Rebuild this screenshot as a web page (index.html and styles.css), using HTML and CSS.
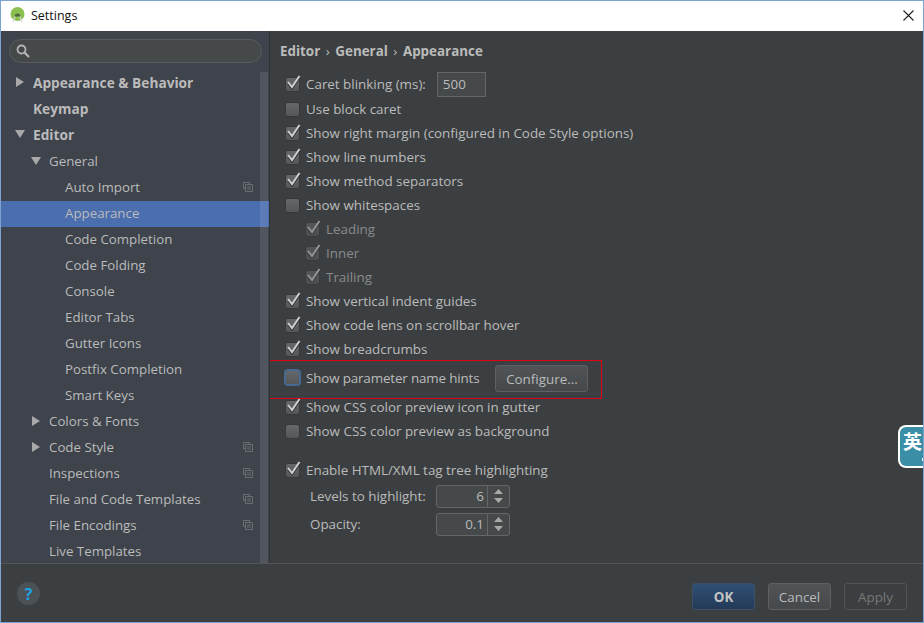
FILE: index.html
```html
<!DOCTYPE html>
<html lang="en">
<head>
<meta charset="utf-8">
<title>Settings</title>
<link rel="stylesheet" href="styles.css">
</head>
<body>
<svg width="0" height="0" class="defs">
  <symbol id="copy" viewBox="0 0 10 10"><path d="M.5.5h6v1.5M.5.5v6H2M2.5 2.500h7v7h-7zM4 5h4M4 7h4" fill="none" stroke="#6a6d71"/></symbol>
  <symbol id="check" viewBox="0 0 16 16"><path d="M3 8.500 7 13.500 14.500 2.500" fill="none" stroke="#2e3032" stroke-width="2"/><path d="M3 7 7 12 14.500 1" fill="none" stroke="#cfcfcf" stroke-width="2"/></symbol>
  <symbol id="spin" viewBox="0 0 9 16"><path d="M4.500 1 9 6H0zM0 10h9l-4.500 5z" fill="#a8a8a8"/></symbol>
</svg>
<div class="window">
  <header class="titlebar">
    <svg class="logo" width="16" height="16" viewBox="0 0 16 16"><circle cx="7.500" cy="7" r="7" fill="#8cc152"/><path d="M3 15 6 7M12 15 9 7" stroke="#d9d9d9" stroke-width="1.200"/><path d="M4.500 9.500a3 3 0 0 1 6 0z" fill="#4f6b35"/></svg>
    <span class="title">Settings</span>
    <svg class="close" width="11" height="11" viewBox="0 0 11 11"><path d="M.5.5 10.500 10.500M10.500.5.5 10.500" stroke="#222" stroke-width="1.100"/></svg>
  </header>
  <div class="content">
    <aside class="sidebar">
      <div class="search">
        <svg width="14" height="14" viewBox="0 0 14 14"><circle cx="5.500" cy="5.500" r="4" fill="none" stroke="#b4b4b4" stroke-width="1.800"/><path d="M8.500 8.500 13 13" stroke="#b4b4b4" stroke-width="2.200"/></svg>
      </div>
      <div class="tree-wrap">
        <ul class="tree">
          <li class="node l0 bold"><i class="tri right"></i>Appearance &amp; Behavior</li>
          <li class="node l0 bold"><i class="tri none"></i>Keymap</li>
          <li class="node l0 bold"><i class="tri down"></i>Editor</li>
          <li class="node l1"><i class="tri down"></i>General</li>
          <li class="node l2">Auto Import<svg class="copy"><use href="#copy"/></svg></li>
          <li class="node l2 selected">Appearance</li>
          <li class="node l2">Code Completion</li>
          <li class="node l2">Code Folding</li>
          <li class="node l2">Console</li>
          <li class="node l2">Editor Tabs</li>
          <li class="node l2">Gutter Icons</li>
          <li class="node l2">Postfix Completion</li>
          <li class="node l2">Smart Keys</li>
          <li class="node l1"><i class="tri right"></i>Colors &amp; Fonts</li>
          <li class="node l1"><i class="tri right"></i>Code Style<svg class="copy"><use href="#copy"/></svg></li>
          <li class="node l1"><i class="tri none"></i>Inspections<svg class="copy"><use href="#copy"/></svg></li>
          <li class="node l1"><i class="tri none"></i>File and Code Templates<svg class="copy"><use href="#copy"/></svg></li>
          <li class="node l1"><i class="tri none"></i>File Encodings<svg class="copy"><use href="#copy"/></svg></li>
          <li class="node l1"><i class="tri none"></i>Live Templates</li>
        </ul>
        <div class="scrollbar"></div>
      </div>
    </aside>
    <main class="main">
      <nav class="crumbs">Editor<span class="sep">›</span>General<span class="sep">›</span>Appearance</nav>
      <div class="row first"><span class="cb on"><svg><use href="#check"/></svg></span>Caret blinking (ms):<span class="input">500</span></div>
      <div class="row"><span class="cb"></span>Use block caret</div>
      <div class="row"><span class="cb on"><svg><use href="#check"/></svg></span>Show right margin (configured in Code Style options)</div>
      <div class="row"><span class="cb on"><svg><use href="#check"/></svg></span>Show line numbers</div>
      <div class="row"><span class="cb on"><svg><use href="#check"/></svg></span>Show method separators</div>
      <div class="row"><span class="cb"></span>Show whitespaces</div>
      <div class="row sub dim"><span class="cb on"><svg><use href="#check"/></svg></span>Leading</div>
      <div class="row sub dim"><span class="cb on"><svg><use href="#check"/></svg></span>Inner</div>
      <div class="row sub dim"><span class="cb on"><svg><use href="#check"/></svg></span>Trailing</div>
      <div class="row"><span class="cb on"><svg><use href="#check"/></svg></span>Show vertical indent guides</div>
      <div class="row"><span class="cb on"><svg><use href="#check"/></svg></span>Show code lens on scrollbar hover</div>
      <div class="row"><span class="cb on"><svg><use href="#check"/></svg></span>Show breadcrumbs</div>
      <div class="row hints"><span class="cb focus"></span><span class="hint-text">Show parameter name hints</span><span class="btn configure">Configure...</span></div>
      <div class="row"><span class="cb on"><svg><use href="#check"/></svg></span>Show CSS color preview icon in gutter</div>
      <div class="row"><span class="cb"></span>Show CSS color preview as background</div>
      <div class="row gap"><span class="cb on"><svg><use href="#check"/></svg></span>Enable HTML/XML tag tree highlighting</div>
      <div class="row field"><span class="flabel">Levels to highlight:</span><span class="spinner"><span class="val">6</span><span class="arrows"><svg><use href="#spin"/></svg></span></span></div>
      <div class="row field"><span class="flabel">Opacity:</span><span class="spinner"><span class="val">0.1</span><span class="arrows"><svg><use href="#spin"/></svg></span></span></div>
    </main>
  </div>
  <footer class="footer">
    <span class="help">?</span>
    <span class="btn primary">OK</span>
    <span class="btn">Cancel</span>
    <span class="btn disabled">Apply</span>
  </footer>
  <div class="ime"><span>英</span><i class="ime-mark"></i></div>
</div>
</body>
</html>
```
FILE: styles.css
```css
* { box-sizing: border-box; }
html, body { margin: 0; padding: 0; height: 100%; overflow: hidden; }
body { font-family: "Open Sans", "Noto Sans CJK SC", sans-serif; font-size: 13.400px; color: #bbbbbb; }
.defs { position: absolute; }
.window { position: relative; width: 924px; height: 623px; border: 1px solid #7da2ce; display: flex; flex-direction: column; background: #3c3f41; overflow: hidden; }
.titlebar { height: 30px; flex: none; background: #fff; display: flex; align-items: center; padding: 0 9px 2px 9px; color: #111; font-size: 12.500px; }
.logo { flex: none; margin-right: 5px; }
.title { flex: 1; }
.content { flex: 1; display: flex; min-height: 0; }
.sidebar { width: 269px; flex: none; background: #3e434c; border-right: 1px solid #323232; display: flex; flex-direction: column; }
.search { margin: 8px 7px 0 8px; height: 24px; border: 1px solid #5a5d5f; border-radius: 12px; background: #45494a; display: flex; align-items: center; padding-left: 6px; flex: none; }
.tree-wrap { position: relative; flex: 1; margin-top: 8px; min-height: 0; overflow: hidden; }
.tree { list-style: none; margin: 0; padding: 0; font-size: 13.300px; }
.node { height: 26px; padding-bottom: 2px; display: flex; align-items: center; position: relative; }
.l0 { padding-left: 15px; }
.l1 { padding-left: 31px; }
.l2 { padding-left: 64px; }
.bold { font-weight: 700; font-size: 13.700px; padding-bottom: 4px; }
.selected { background: #4b6eaf; }
.tri { width: 17px; flex: none; height: 10px; display: block; }
.tri.right { border-left: 8px solid #a8a8a8; border-top: 5px solid transparent; border-bottom: 5px solid transparent; width: 0; margin-right: 9px; }
.tri.down { border-top: 8px solid #a8a8a8; border-left: 5px solid transparent; border-right: 5px solid transparent; width: 0; height: 0; margin-right: 8px; margin-left: -1px; }
.copy { position: absolute; left: 242px; top: 7px; width: 10px; height: 10px; }
.scrollbar { position: absolute; right: 1px; top: 1px; bottom: 0; width: 8px; background: rgba(255, 255, 255, .1); }
.main { flex: 1; min-width: 0; display: flex; flex-direction: column; }
.crumbs { font-weight: 700; padding: 10px 0 0 10px; height: 35px; flex: none; line-height: 20px; }
.sep { font-weight: 400; margin: 0 5.500px; }
.row { height: 24px; flex: none; display: flex; align-items: center; padding-left: 16px; white-space: nowrap; }
.first { height: 30px; margin-top: 3px; margin-bottom: -2px; }
.cb { width: 13px; height: 13px; flex: none; margin-right: 7px; border-radius: 2px; background: linear-gradient(#65686a, #55585a); box-shadow: 0 0 0 1px #36383a; position: relative; }
.cb svg { position: absolute; left: -1px; top: -3px; width: 16px; height: 16px; overflow: visible; }
.cb.focus { box-shadow: 0 0 0 2px #46698f; margin-bottom: 2px; }
.sub { padding-left: 36px; }
.dim { color: #8a8a8a; }
.dim .cb { opacity: .6; }
.input { margin-left: 11px; width: 49px; height: 25px; border: 1px solid #63676a; background: #45494a; padding-left: 5px; line-height: 23px; }
.hints { height: 39px; margin-top: -1px; margin-bottom: -4px; padding-bottom: 2px; width: 332px; border: 1px solid #e60012; border-left: 0; }
.hint-text { letter-spacing: -.15px; margin-bottom: 2px; }
.btn { width: 63px; height: 27px; border: 1px solid #5e6163; border-radius: 3px; background: linear-gradient(#505456, #45494b); display: inline-flex; align-items: center; justify-content: center; }
.configure { width: 93px; margin-left: 16px; }
.gap { margin-top: 15px; }
.field { padding-left: 40px; height: 28px; }
.flabel { width: 126px; flex: none; }
.spinner { width: 74px; height: 23px; border: 1px solid #63676a; border-radius: 3px; background: #45494a; display: flex; }
.val { flex: 1; text-align: right; padding-right: 3px; line-height: 21px; border-right: 1px solid #63676a; }
.arrows { width: 21px; flex: none; display: flex; align-items: center; justify-content: center; }
.arrows svg { width: 9px; height: 16px; }
.footer { height: 59px; flex: none; border-top: 1px solid #555555; display: flex; align-items: flex-end; padding: 0 16px 12px 0; gap: 13px; justify-content: flex-end; position: relative; }
.help { position: absolute; left: 16px; top: 18px; width: 23px; height: 23px; border-radius: 50%; background: #4b5154; color: #1ba1e2; font-weight: 700; font-size: 16px; display: flex; align-items: center; justify-content: center; }
.primary { background: linear-gradient(#2f4f74, #243a57); border-color: #3b4f66; font-weight: 700; color: #c4c4c4; }
.disabled { background: none; border-color: #515456; color: #777777; }
.ime { position: absolute; right: -1px; top: 424px; width: 26px; height: 43px; background: #3a8ea6; border: 2px solid #fff; border-right: 0; border-radius: 8px 0 0 8px; color: #fff; font-family: "Noto Sans CJK SC", sans-serif; font-weight: 700; font-size: 19px; line-height: 27px; padding-left: 3px; white-space: nowrap; overflow: hidden; }
.ime-mark { position: absolute; right: 0; bottom: 5px; width: 2px; height: 3px; background: #fff; }
```
